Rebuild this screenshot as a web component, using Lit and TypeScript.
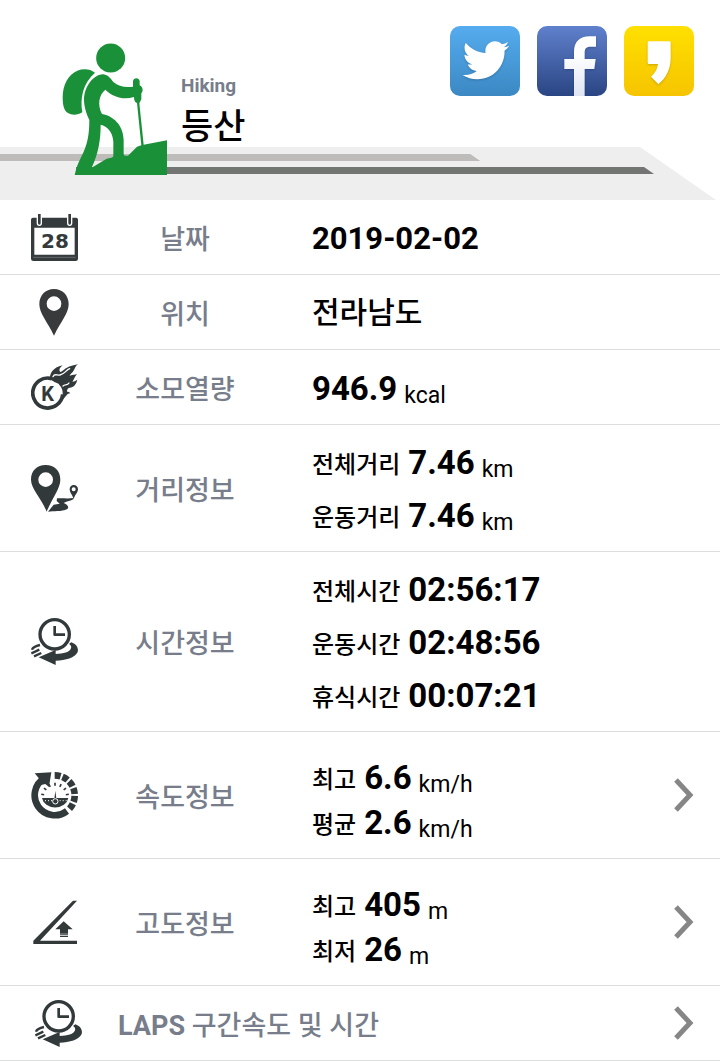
import { LitElement, html, css, svg, nothing, type TemplateResult } from "lit";
import { customElement, property } from "lit/decorators.js";

type Reading = { name?: string; value: string; unit?: string; kind?: string };
type Row = {
  id: string;
  label: string;
  icon: TemplateResult;
  readings: Reading[];
  link?: boolean;
};

const calendarIcon = html`<svg viewBox="33 27 141 141" aria-hidden="true">
  <path fill="#353b3d" fill-rule="evenodd" d="M39 38H168Q174 38 174 44V161Q174 168 167 168H40Q33 168 33 161V44Q33 38 39 38ZM43 68V149H164V68Z"/>
  <path stroke="#7e8283" stroke-width="2" d="M40 157H167"/>
  <path fill="#353b3d" stroke="#fff" stroke-width="4" d="M52 24H64V54Q64 61 58 61T52 54ZM143 24H155V54Q155 61 149 61T143 54Z"/>
  <text class="day" x="105" y="130" text-anchor="middle">28</text>
</svg>`;

const pinIcon = html`<svg viewBox="33 252 141 141" aria-hidden="true">
  <path fill="#383a3b" fill-rule="evenodd" d="M102 252C128 252 146 271 146 298C146 325 122 350 102 392C82 350 58 325 58 298C58 271 76 252 102 252ZM102 274A22 22 0 1 0 102 318A22 22 0 1 0 102 274Z"/>
</svg>`;

const calorieIcon = html`<svg viewBox="33 479 141 141" aria-hidden="true">
  <path fill="none" stroke="#32393b" stroke-width="11" d="M92 522A45 45 0 1 0 128 570"/>
  <path fill="#32393b" d="M90 528C88 507 98 490 128 483C118 491 116 498 121 503C132 501 134 486 174 480C164 486 165 496 158 503C154 508 150 510 149 514C160 511 165 511 171 509C164 516 162 527 157 532C162 531 167 530 172 526C169 539 162 549 149 550C142 551 141 557 141 562C145 562 148 563 151 567C138 568 138 580 124 590C132 570 128 550 118 542C116 536 105 536 100 531C96 527 93 527 90 528Z"/>
  <path fill="none" stroke="#fff" stroke-width="4" stroke-linecap="round" d="M99 517C103 506 112 514 120 512C133 510 138 497 149 493M129 545C135 540 142 544 147 536"/>
  <text class="kcal" x="83" y="591" text-anchor="middle">K</text>
</svg>`;

const routeIcon = html`<svg viewBox="33 75 141 141" aria-hidden="true">
  <path fill="#32393b" fill-rule="evenodd" d="M77 75C103 75 121 92 121 119C121 145 98 172 80 215C63 172 33 146 33 119C33 92 51 75 77 75ZM77 97A22 22 0 1 0 77 141A22 22 0 1 0 77 97Z"/>
  <path fill="#32393b" fill-rule="evenodd" d="M161 135C169 135 174 140 174 148C174 157 166 163 161 177C156 163 149 157 149 148C149 140 154 135 161 135ZM161 142A6 6 0 1 0 161 154A6 6 0 1 0 161 142Z"/>
  <path fill="#32393b" d="M160 174C145 177 129 174 111 175L110 183L119 191L101 194L84 215C101 212 124 216 142 207C149 199 140 193 131 189C141 184 153 182 160 178Z"/>
</svg>`;

const clockIcon = html`<svg viewBox="33 534 141 141" aria-hidden="true">
  <circle cx="104" cy="583" r="44" fill="none" stroke="#32393b" stroke-width="10"/>
  <path fill="none" stroke="#32393b" stroke-width="8" stroke-linejoin="round" d="M104 558V584H135"/>
  <path fill="#32393b" d="M154 607C170 613 176 624 173 636C165 654 137 661 107 662V675L56 652L107 630V642C130 642 150 636 153 625C155 618 151 614 147 612Z"/>
  <path fill="none" stroke="#32393b" stroke-width="7" d="M36 629C38 622 48 618 60 615M34 640L58 629M42 649L64 639"/>
</svg>`;

const ticks = [-80, -52, -26, 0, 26, 52, 80];
const speedIcon = html`<svg viewBox="33 96 141 141" aria-hidden="true">
  <path fill="none" stroke="#32393b" stroke-width="20" d="M72 115A60 60 0 1 0 141 213"/>
  <path fill="#32393b" d="M44 100L94 97L87 141L76 132L66 134L61 120Z"/>
  <path fill="none" stroke="#32393b" stroke-width="20" stroke-dasharray="18 6" d="M104 106A60 60 0 0 1 147 208"/>
  <path fill="#32393b" d="M66 174H145A40 34 0 0 1 66 174Z"/>
  ${ticks.map((a) => svg`<path stroke="#32393b" stroke-width="5" transform=${`rotate(${a} 105 170)`} d="M105 128V137"/>`)}
  <path fill="#32393b" d="M103 176L106 152L109 176Z"/>
  <circle cx="106" cy="184" r="8" fill="#32393b" stroke="#fff" stroke-width="3"/>
  <path stroke="#fff" stroke-width="3" stroke-dasharray="3 6" d="M75 182H96M119 182H140"/>
</svg>`;

const slopeIcon = html`<svg viewBox="33 477 141 141" aria-hidden="true">
  <path fill="#333839" fill-rule="evenodd" d="M159 482H171L60 602H171V612H40V602Z"/>
  <path fill="#333839" d="M131 544L158 568H144V581H120V568H106ZM120 583H144V586H120ZM120 588H144V591H120Z"/>
</svg>`;

const rows: Row[] = [
  { id: "date", label: "날짜", icon: calendarIcon, readings: [{ value: "2019-02-02", kind: "plain" }] },
  { id: "place", label: "위치", icon: pinIcon, readings: [{ value: "전라남도", kind: "place" }] },
  { id: "calories", label: "소모열량", icon: calorieIcon, readings: [{ value: "946.9", unit: "kcal" }] },
  {
    id: "distance", label: "거리정보", icon: routeIcon,
    readings: [
      { name: "전체거리", value: "7.46", unit: "km" },
      { name: "운동거리", value: "7.46", unit: "km" },
    ],
  },
  {
    id: "time", label: "시간정보", icon: clockIcon,
    readings: [
      { name: "전체시간", value: "02:56:17" },
      { name: "운동시간", value: "02:48:56" },
      { name: "휴식시간", value: "00:07:21" },
    ],
  },
  {
    id: "speed", label: "속도정보", icon: speedIcon, link: true,
    readings: [
      { name: "최고", value: "6.6", unit: "km/h" },
      { name: "평균", value: "2.6", unit: "km/h" },
    ],
  },
  {
    id: "altitude", label: "고도정보", icon: slopeIcon, link: true,
    readings: [
      { name: "최고", value: "405", unit: "m" },
      { name: "최저", value: "26", unit: "m" },
    ],
  },
];

const chevron = html`<svg class="chevron" viewBox="0 0 20 34" aria-hidden="true">
  <path fill="none" stroke="#868686" stroke-width="5" d="M2 2L16 17L2 32"/>
</svg>`;

@customElement("activity-header")
export class ActivityHeader extends LitElement {
  @property() kind = "";
  @property() name = "";

  static styles = css`
    :host {
      display: grid;
      grid-template-columns: 1fr auto;
    }
    .banner {
      grid-area: 1 / 1 / 2 / 3;
      align-self: end;
      display: flex;
      flex-direction: column;
      gap: 6px;
      padding: 7px 0 26px;
      background: #eeeeee;
      clip-path: polygon(0 0, calc(100% - 80px) 0, calc(100% - 4px) 100%, 0 100%);
    }
    .stripe {
      height: 7px;
      clip-path: polygon(0 0, calc(100% - 10px) 0, 100% 100%, 0 100%);
    }
    .light {
      margin-right: 33.3%;
      background: #bdbcbb;
    }
    .dark {
      margin: 0 66px 0 76px;
      background: #737573;
    }
    .activity {
      grid-area: 1 / 1 / 2 / 2;
      display: flex;
      gap: 14px;
      padding: 43px 0 25px 62px;
      z-index: 1;
    }
    .hiker {
      width: 105px;
      height: 132px;
      fill: #1a9138;
    }
    .titles {
      padding-top: 31px;
    }
    .kind {
      margin: 0;
      font-size: 19px;
      line-height: 24px;
      font-weight: 700;
      color: #777d8a;
    }
    h1 {
      margin: 0;
      padding-top: 8px;
      font-size: 35px;
      line-height: 44px;
      font-weight: 500;
      color: #000;
    }
    .share {
      grid-area: 1 / 2 / 2 / 3;
      display: flex;
      align-items: flex-start;
      gap: 17px;
      padding: 26px 26px 0 0;
      z-index: 1;
    }
    button {
      width: 70px;
      height: 70px;
      padding: 0;
      border: 0;
      border-radius: 10px;
      overflow: hidden;
      cursor: pointer;
    }
    button svg {
      display: block;
      width: 70px;
      height: 70px;
      filter: drop-shadow(0 1px 1px rgba(0, 0, 0, 0.2));
    }
    .twitter {
      background: linear-gradient(#55acee, #3b88c3);
    }
    .facebook {
      background: linear-gradient(#5f80cc, #2a4583);
    }
    .story {
      background: linear-gradient(#ffe000, #f6c400);
    }
  `;

  render() {
    return html`
      <div class="banner">
        <div class="stripe light"></div>
        <div class="stripe dark"></div>
      </div>
      <div class="activity">
        <svg class="hiker" viewBox="186 69 315 396" aria-hidden="true">
          <circle cx="332" cy="114" r="43.5"/>
          <path d="M285 158C270 146 250 145 232 152C205 163 188 195 188 232C188 264 195 284 222 284C232 284 240 281 247 277C240 235 248 190 285 158Z"/>
          <path fill-rule="evenodd" d="M310 163C325 165 332 176 341 187C354 198 375 204 399 200V184C400 172 418 172 419 184V196C430 202 430 214 424 220V238L418 250L431 374L501 361V465H224C228 445 236 425 245 408C262 375 268 345 268 300C260 283 252 262 252 238C253 195 285 162 310 163ZM302 314C322 319 338 335 340 365V408Q340 412 334 413L320 416L275 443C295 400 302 360 302 314ZM402 231C370 240 340 232 316 209C296 225 292 255 306 282C340 288 370 315 371 360V402Q371 406 375 407H384L411 380L424 376L411 249C404 247 402 240 402 231Z"/>
        </svg>
        <div class="titles">
          <p class="kind">${this.kind}</p>
          <h1>${this.name}</h1>
        </div>
      </div>
      <div class="share">
        <button class="twitter" aria-label="Twitter">
          <svg viewBox="27 33 210 210"><path fill="#fff" transform="translate(59 62) scale(6.17)" d="M23.643 4.937c-.835.37-1.732.62-2.675.733.962-.576 1.7-1.49 2.048-2.578-.9.534-1.897.922-2.958 1.13-.85-.904-2.06-1.47-3.4-1.47-2.572 0-4.658 2.086-4.658 4.66 0 .364.042.718.12 1.06-3.873-.195-7.304-2.05-9.602-4.868-.4.69-.63 1.49-.63 2.342 0 1.616.823 3.043 2.072 3.878-.764-.025-1.482-.234-2.11-.583v.06c0 2.257 1.605 4.14 3.737 4.568-.392.106-.803.162-1.227.162-.3 0-.593-.028-.877-.082.593 1.85 2.313 3.198 4.352 3.234-1.595 1.25-3.604 1.995-5.786 1.995-.376 0-.747-.022-1.112-.065 2.062 1.323 4.51 2.093 7.14 2.093 8.57 0 13.255-7.098 13.255-13.254 0-.2-.005-.402-.014-.602.91-.658 1.7-1.477 2.323-2.41z"/></svg>
        </button>
        <button class="facebook" aria-label="Facebook">
          <svg viewBox="291 33 210 210">
            <defs><linearGradient id="f" x2="0" y2="1"><stop offset=".3" stop-color="#fff"/><stop offset="1" stop-color="#dfe5f2"/></linearGradient></defs>
            <path fill="url(#f)" d="M402 243V162H373V132H402V110C402 80 420 64 448 64H468V95H452C440 95 434 100 434 112V132H467L463 162H434V243Z"/>
          </svg>
        </button>
        <button class="story" aria-label="KakaoStory">
          <svg viewBox="552 33 210 210"><path fill="#fff" d="M627 79H688Q692 79 692 83V130C692 162 678 190 655 208L633 185C646 174 652 162 654 147H627Q623 147 623 143V83Q623 79 627 79Z"/></svg>
        </button>
      </div>
    `;
  }
}

@customElement("app-root")
export class AppRoot extends LitElement {
  static styles = css`
    :host {
      display: block;
      background: #fff;
      color: #000;
      font-family: Roboto, "Noto Sans CJK KR", sans-serif;
    }
    .row {
      box-sizing: border-box;
      min-height: 75px;
      display: grid;
      grid-template-columns: 47px 214px 1fr auto;
      align-items: center;
      padding: 9px 26px 9px 31px;
      border-bottom: 1px solid #dcdddd;
      color: inherit;
      text-decoration: none;
    }
    .linked {
      padding-top: 13px;
      padding-bottom: 13px;
    }
    .icon {
      display: flex;
    }
    .icon svg {
      width: 47px;
      height: 47px;
    }
    .day {
      font: 700 60px "DejaVu Sans", sans-serif;
      fill: #353b3d;
    }
    .kcal {
      font: 700 60px Roboto, sans-serif;
      fill: #32393b;
    }
    .label {
      margin: 0;
      padding-top: 5px;
      font-size: 27px;
      line-height: 40px;
      font-weight: 500;
      color: #777d8a;
      text-align: center;
    }
    .readings {
      padding: 2px 0 0 20px;
    }
    .linked .readings {
      padding-top: 10px;
    }
    .reading {
      display: flex;
      align-items: center;
      height: 53px;
    }
    .linked .reading {
      height: 45px;
    }
    .name {
      margin-right: 8px;
      font-size: 24px;
      font-weight: 500;
    }
    .value {
      font-size: 33px;
      font-weight: 700;
    }
    .plain {
      font-size: 31px;
    }
    .place {
      font-size: 30px;
      line-height: 40px;
      font-weight: 500;
    }
    .unit {
      padding: 14px 0 0 7px;
      font-size: 23px;
    }
    .chevron {
      width: 20px;
      height: 34px;
    }
    .laps {
      grid-template-columns: 47px 1fr auto;
      column-gap: 36px;
      padding-left: 35px;
    }
    .laps .label {
      text-align: left;
    }
    .latin {
      font-weight: 700;
    }
  `;

  private renderRow(row: Row) {
    const body = html`
      <span class="icon">${row.icon}</span>
      <h2 class="label">${row.label}</h2>
      <div class="readings">
        ${row.readings.map(
          (r) => html`<div class="reading">
            ${r.name ? html`<span class="name">${r.name}</span>` : nothing}
            <span class="value ${r.kind ?? ""}">${r.value}</span>
            ${r.unit ? html`<span class="unit">${r.unit}</span>` : nothing}
          </div>`,
        )}
      </div>
    `;
    return row.link
      ? html`<a class="row linked" href="#${row.id}">${body}${chevron}</a>`
      : html`<section class="row">${body}</section>`;
  }

  render() {
    return html`
      <activity-header kind="Hiking" name="등산"></activity-header>
      <main>
        ${rows.map((row) => this.renderRow(row))}
        <a class="row laps" href="#laps">
          <span class="icon">${clockIcon}</span>
          <h2 class="label"><span class="latin">LAPS</span> 구간속도 및 시간</h2>
          ${chevron}
        </a>
      </main>
    `;
  }
}
